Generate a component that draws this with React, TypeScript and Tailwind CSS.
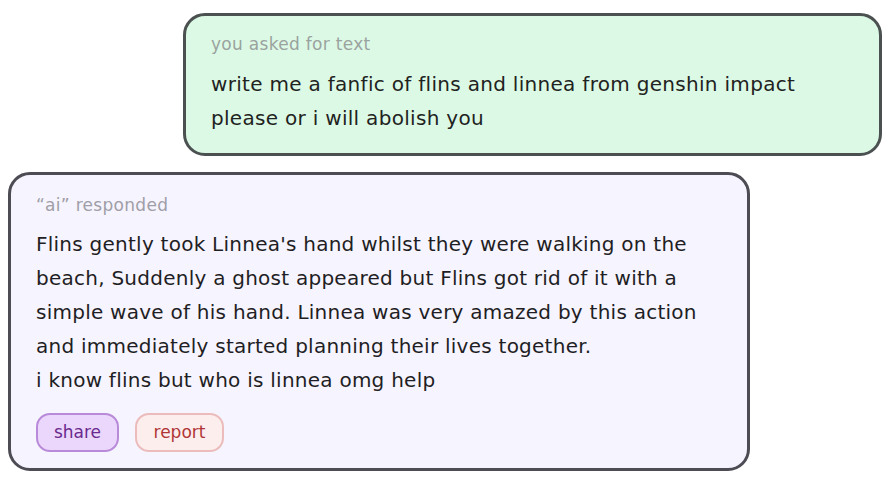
import React from "react";

export default function App() {
  const font = { fontFamily: '"DejaVu Sans", "Noto Sans", sans-serif' };
  return (
    <div className="w-[896px] h-[482px] bg-white flex flex-col pt-[13px]" style={font}>
      <div className="self-end mr-[14px] w-[699px] h-[143px] rounded-[22px] border-[3px] border-[#4b5150] bg-[#dcf9e6] px-[25px] pt-[16px]">
        <div className="text-[17px] leading-[24px] tracking-[0.3px] text-[#9aa39e]">you asked for text</div>
        <div className="mt-[11px] text-[20px] leading-[34px] tracking-[0.3px] text-[#1f2321]">
          write me a fanfic of flins and linnea from genshin impact
          <br />
          please or i will abolish you
        </div>
      </div>
      <div className="ml-[8px] mt-[16px] w-[742px] h-[299px] rounded-[22px] border-[3px] border-[#4d4c55] bg-[#f6f4fe] px-[25px] pt-[18px]">
        <div className="text-[17px] leading-[24px] tracking-[0.3px] text-[#a09ea7]">“ai” responded</div>
        <div className="mt-[10px] text-[20px] leading-[34px] tracking-[0.25px] text-[#1f1e24]">
          Flins gently took Linnea's hand whilst they were walking on the
          <br />
          beach, Suddenly a ghost appeared but Flins got rid of it with a
          <br />
          simple wave of his hand. Linnea was very amazed by this action
          <br />
          and immediately started planning their lives together.
          <br />
          i know flins but who is linnea omg help
        </div>
        <div className="mt-[16px] flex gap-[16px]">
          <button className="h-[39px] w-[83px] rounded-[14px] border-[2px] border-[#b98ad9] bg-[#ead7fb] text-[17px] text-[#6a2a8e]" style={font}>
            share
          </button>
          <button className="h-[39px] w-[89px] rounded-[14px] border-[2px] border-[#ecbcbc] bg-[#fdeeee] text-[17px] text-[#b03636]" style={font}>
            report
          </button>
        </div>
      </div>
    </div>
  );
}
